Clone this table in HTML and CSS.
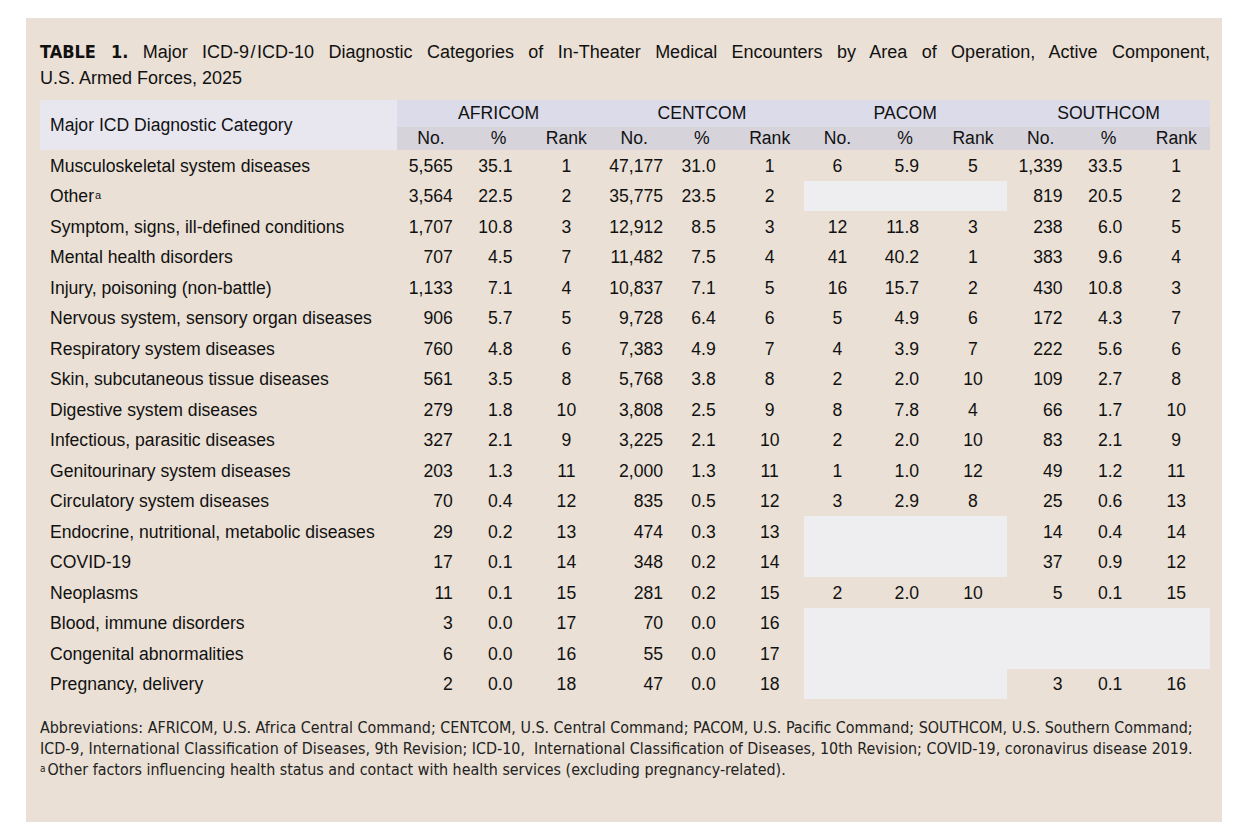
FILE: index.html
```html
<!DOCTYPE html>
<html lang="en">
<head>
    <meta charset="UTF-8">
    <title>Table 1. Major ICD-9/ICD-10 Diagnostic Categories</title>
    <link rel="stylesheet" href="styles.css">
</head>
<body>
    <div class="panel">
        <div class="title">
            <div class="title-line"><span class="table-no">TABLE 1.</span> Major ICD-9&#8202;/&#8202;ICD-10 Diagnostic Categories of In-Theater Medical Encounters by Area of Operation, Active Component,</div>
            <div>U.S. Armed Forces, 2025</div>
        </div>

        <table class="data">
            <colgroup>
                <col class="col-cat">
                <col span="12" class="col-num">
            </colgroup>
            <thead>
                <tr class="group-row">
                    <th rowspan="2" class="cat-head">Major ICD Diagnostic Category</th>
                    <th colspan="3">AFRICOM</th>
                    <th colspan="3">CENTCOM</th>
                    <th colspan="3">PACOM</th>
                    <th colspan="3">SOUTHCOM</th>
                </tr>
                <tr class="sub-row">
                    <th>No.</th><th>%</th><th>Rank</th>
                    <th>No.</th><th>%</th><th>Rank</th>
                    <th>No.</th><th>%</th><th>Rank</th>
                    <th>No.</th><th>%</th><th>Rank</th>
                </tr>
            </thead>
            <tbody>
                <tr>
                    <td>Musculoskeletal system diseases</td>
                    <td class="n-af">5,565</td><td class="pct">35.1</td><td class="rank">1</td>
                    <td class="n-ce">47,177</td><td class="pct">31.0</td><td class="rank">1</td>
                    <td class="n-pa">6</td><td class="pct">5.9</td><td class="rank">5</td>
                    <td class="n-so">1,339</td><td class="pct">33.5</td><td class="rank">1</td>
                </tr>
                <tr>
                    <td>Other<sup>a</sup></td>
                    <td class="n-af">3,564</td><td class="pct">22.5</td><td class="rank">2</td>
                    <td class="n-ce">35,775</td><td class="pct">23.5</td><td class="rank">2</td>
                    <td colspan="3" class="na"></td>
                    <td class="n-so">819</td><td class="pct">20.5</td><td class="rank">2</td>
                </tr>
                <tr>
                    <td>Symptom, signs, ill-defined conditions</td>
                    <td class="n-af">1,707</td><td class="pct">10.8</td><td class="rank">3</td>
                    <td class="n-ce">12,912</td><td class="pct">8.5</td><td class="rank">3</td>
                    <td class="n-pa">12</td><td class="pct">11.8</td><td class="rank">3</td>
                    <td class="n-so">238</td><td class="pct">6.0</td><td class="rank">5</td>
                </tr>
                <tr>
                    <td>Mental health disorders</td>
                    <td class="n-af">707</td><td class="pct">4.5</td><td class="rank">7</td>
                    <td class="n-ce">11,482</td><td class="pct">7.5</td><td class="rank">4</td>
                    <td class="n-pa">41</td><td class="pct">40.2</td><td class="rank">1</td>
                    <td class="n-so">383</td><td class="pct">9.6</td><td class="rank">4</td>
                </tr>
                <tr>
                    <td>Injury, poisoning (non-battle)</td>
                    <td class="n-af">1,133</td><td class="pct">7.1</td><td class="rank">4</td>
                    <td class="n-ce">10,837</td><td class="pct">7.1</td><td class="rank">5</td>
                    <td class="n-pa">16</td><td class="pct">15.7</td><td class="rank">2</td>
                    <td class="n-so">430</td><td class="pct">10.8</td><td class="rank">3</td>
                </tr>
                <tr>
                    <td>Nervous system, sensory organ diseases</td>
                    <td class="n-af">906</td><td class="pct">5.7</td><td class="rank">5</td>
                    <td class="n-ce">9,728</td><td class="pct">6.4</td><td class="rank">6</td>
                    <td class="n-pa">5</td><td class="pct">4.9</td><td class="rank">6</td>
                    <td class="n-so">172</td><td class="pct">4.3</td><td class="rank">7</td>
                </tr>
                <tr>
                    <td>Respiratory system diseases</td>
                    <td class="n-af">760</td><td class="pct">4.8</td><td class="rank">6</td>
                    <td class="n-ce">7,383</td><td class="pct">4.9</td><td class="rank">7</td>
                    <td class="n-pa">4</td><td class="pct">3.9</td><td class="rank">7</td>
                    <td class="n-so">222</td><td class="pct">5.6</td><td class="rank">6</td>
                </tr>
                <tr>
                    <td>Skin, subcutaneous tissue diseases</td>
                    <td class="n-af">561</td><td class="pct">3.5</td><td class="rank">8</td>
                    <td class="n-ce">5,768</td><td class="pct">3.8</td><td class="rank">8</td>
                    <td class="n-pa">2</td><td class="pct">2.0</td><td class="rank">10</td>
                    <td class="n-so">109</td><td class="pct">2.7</td><td class="rank">8</td>
                </tr>
                <tr>
                    <td>Digestive system diseases</td>
                    <td class="n-af">279</td><td class="pct">1.8</td><td class="rank">10</td>
                    <td class="n-ce">3,808</td><td class="pct">2.5</td><td class="rank">9</td>
                    <td class="n-pa">8</td><td class="pct">7.8</td><td class="rank">4</td>
                    <td class="n-so">66</td><td class="pct">1.7</td><td class="rank">10</td>
                </tr>
                <tr>
                    <td>Infectious, parasitic diseases</td>
                    <td class="n-af">327</td><td class="pct">2.1</td><td class="rank">9</td>
                    <td class="n-ce">3,225</td><td class="pct">2.1</td><td class="rank">10</td>
                    <td class="n-pa">2</td><td class="pct">2.0</td><td class="rank">10</td>
                    <td class="n-so">83</td><td class="pct">2.1</td><td class="rank">9</td>
                </tr>
                <tr>
                    <td>Genitourinary system diseases</td>
                    <td class="n-af">203</td><td class="pct">1.3</td><td class="rank">11</td>
                    <td class="n-ce">2,000</td><td class="pct">1.3</td><td class="rank">11</td>
                    <td class="n-pa">1</td><td class="pct">1.0</td><td class="rank">12</td>
                    <td class="n-so">49</td><td class="pct">1.2</td><td class="rank">11</td>
                </tr>
                <tr>
                    <td>Circulatory system diseases</td>
                    <td class="n-af">70</td><td class="pct">0.4</td><td class="rank">12</td>
                    <td class="n-ce">835</td><td class="pct">0.5</td><td class="rank">12</td>
                    <td class="n-pa">3</td><td class="pct">2.9</td><td class="rank">8</td>
                    <td class="n-so">25</td><td class="pct">0.6</td><td class="rank">13</td>
                </tr>
                <tr>
                    <td>Endocrine, nutritional, metabolic diseases</td>
                    <td class="n-af">29</td><td class="pct">0.2</td><td class="rank">13</td>
                    <td class="n-ce">474</td><td class="pct">0.3</td><td class="rank">13</td>
                    <td colspan="3" class="na"></td>
                    <td class="n-so">14</td><td class="pct">0.4</td><td class="rank">14</td>
                </tr>
                <tr>
                    <td>COVID-19</td>
                    <td class="n-af">17</td><td class="pct">0.1</td><td class="rank">14</td>
                    <td class="n-ce">348</td><td class="pct">0.2</td><td class="rank">14</td>
                    <td colspan="3" class="na"></td>
                    <td class="n-so">37</td><td class="pct">0.9</td><td class="rank">12</td>
                </tr>
                <tr>
                    <td>Neoplasms</td>
                    <td class="n-af">11</td><td class="pct">0.1</td><td class="rank">15</td>
                    <td class="n-ce">281</td><td class="pct">0.2</td><td class="rank">15</td>
                    <td class="n-pa">2</td><td class="pct">2.0</td><td class="rank">10</td>
                    <td class="n-so">5</td><td class="pct">0.1</td><td class="rank">15</td>
                </tr>
                <tr>
                    <td>Blood, immune disorders</td>
                    <td class="n-af">3</td><td class="pct">0.0</td><td class="rank">17</td>
                    <td class="n-ce">70</td><td class="pct">0.0</td><td class="rank">16</td>
                    <td colspan="6" class="na"></td>
                </tr>
                <tr>
                    <td>Congenital abnormalities</td>
                    <td class="n-af">6</td><td class="pct">0.0</td><td class="rank">16</td>
                    <td class="n-ce">55</td><td class="pct">0.0</td><td class="rank">17</td>
                    <td colspan="6" class="na"></td>
                </tr>
                <tr>
                    <td>Pregnancy, delivery</td>
                    <td class="n-af">2</td><td class="pct">0.0</td><td class="rank">18</td>
                    <td class="n-ce">47</td><td class="pct">0.0</td><td class="rank">18</td>
                    <td colspan="3" class="na"></td>
                    <td class="n-so">3</td><td class="pct">0.1</td><td class="rank">16</td>
                </tr>
            </tbody>
        </table>

        <div class="notes">
            Abbreviations: AFRICOM, U.S. Africa Central Command; CENTCOM, U.S. Central Command; PACOM, U.S. Pacific Command; SOUTHCOM, U.S. Southern Command;<br>
            ICD-9, International Classification of Diseases, 9th Revision; ICD-10,&nbsp; International Classification of Diseases, 10th Revision; COVID-19, coronavirus disease 2019.<br>
            <sup>a</sup>Other factors influencing health status and contact with health services (excluding pregnancy-related).
        </div>
    </div>
</body>
</html>
```

FILE: styles.css
```css
:root {
    --panel-bg: #eae0d5;
    --head-cat: #e8e7f0;
    --head-group: #dcdbe9;
    --head-sub: #d6d3db;
    --empty-bg: #eeedf0;
    --text: #111;
}

* {
    box-sizing: border-box;
    margin: 0;
    padding: 0;
}

body {
    font-family: "Liberation Sans", Arial, sans-serif;
    background-color: #fff;
    color: var(--text);
    padding: 18px 0 0 26px;
}

.panel {
    width: 1196px;
    height: 804px;
    background-color: var(--panel-bg);
    padding: 21px 12px 0 14px;
}

.title {
    font-size: 18px;
    line-height: 25.5px;
    margin-bottom: 9px;
}

.title-line {
    text-align: justify;
    text-align-last: justify;
}

.table-no {
    font-family: "Liberation Sans Narrow", "DejaVu Sans Condensed", sans-serif;
    font-weight: bold;
    letter-spacing: 0;
}

.data {
    width: 1170px;
    table-layout: fixed;
    border-collapse: collapse;
    border-spacing: 0;
    font-size: 17.6px;
}

.col-cat {
    width: 357px;
}

.col-num {
    width: 67.75px;
}

th {
    font-weight: normal;
    text-align: center;
}

.group-row th {
    height: 27px;
    background-color: var(--head-group);
}

.sub-row th {
    height: 23px;
    background-color: var(--head-sub);
}

.group-row th.cat-head {
    background-color: var(--head-cat);
    text-align: left;
    padding: 1px 10px 0;
}

td {
    height: 30.5px;
    padding: 2px 0 0;
    white-space: nowrap;
}

td:first-child {
    padding-left: 10px;
}

td sup {
    font-size: 11px;
    vertical-align: 3px;
    margin-left: 1px;
}

.n-af, .n-so {
    text-align: right;
    padding-right: 12px;
}

.n-ce {
    text-align: right;
    padding-right: 5px;
}

.n-pa {
    text-align: center;
}

.pct {
    text-align: right;
    padding-right: 20px;
}

.rank {
    text-align: center;
}

.na {
    background-color: var(--empty-bg);
}

.notes {
    margin-top: 19px;
    font-family: "Liberation Sans Narrow", "DejaVu Sans Condensed", sans-serif;
    font-size: 15.9px;
    line-height: 20.5px;
    color: #222;
}

.notes sup {
    font-size: 10px;
    vertical-align: 3px;
    margin-right: 2px;
}
```
